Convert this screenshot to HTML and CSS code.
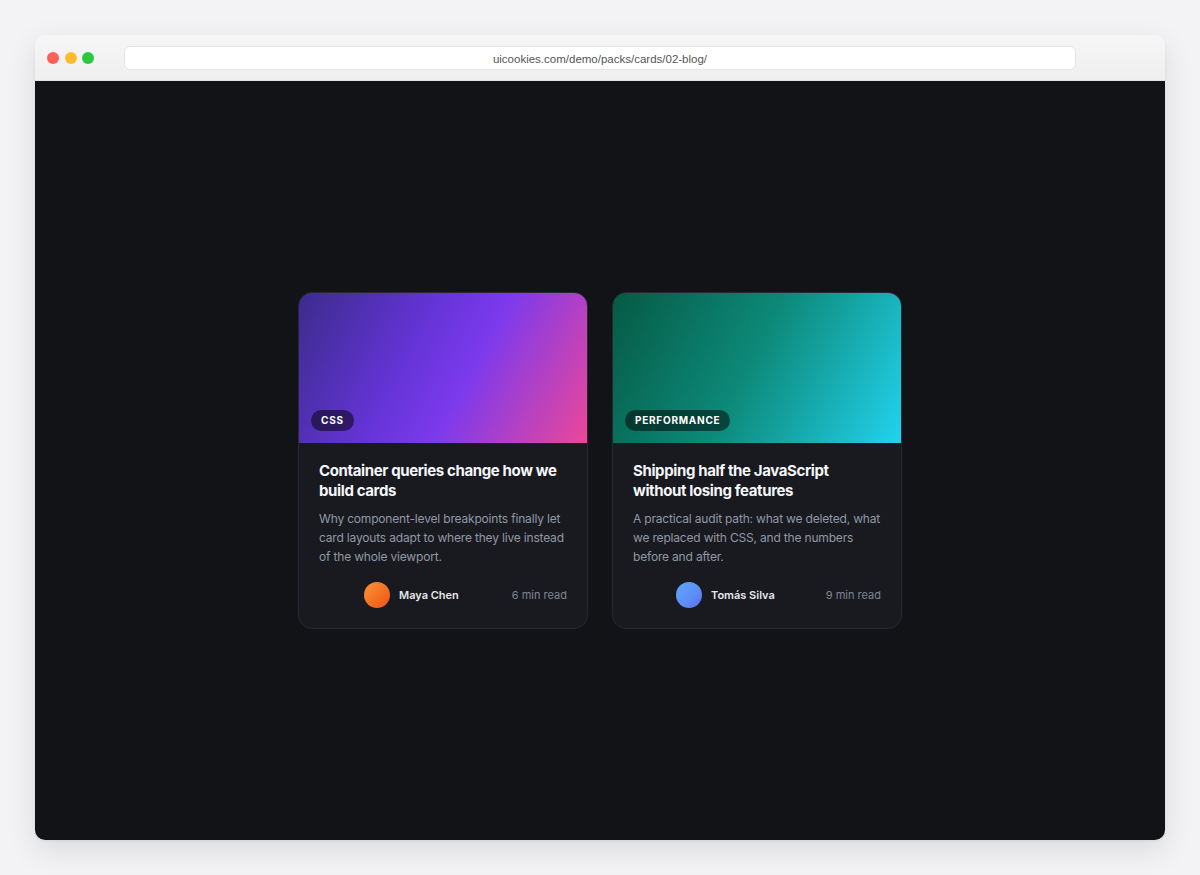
FILE: index.html
```html
<!DOCTYPE html>
<html lang="en">
<head>
    <meta charset="UTF-8">
    <meta name="viewport" content="width=device-width, initial-scale=1.0">
    <title>Cards - Blog</title>
    <link rel="stylesheet" href="styles.css">
</head>
<body>
    <div class="window">
        <div class="titlebar">
            <div class="dots">
                <span class="dot red"></span>
                <span class="dot yellow"></span>
                <span class="dot green"></span>
            </div>
            <div class="url">uicookies.com/demo/packs/cards/02-blog/</div>
        </div>

        <main class="stage">
            <article class="card">
                <div class="cover cover-css">
                    <span class="tag">CSS</span>
                </div>
                <div class="card-body">
                    <h3>Container queries change how we build cards</h3>
                    <p>Why component-level breakpoints finally let card layouts adapt to where they live instead of the whole viewport.</p>
                    <div class="meta">
                        <span></span>
                        <div class="author">
                            <span class="avatar avatar-orange"></span>
                            <span class="name">Maya Chen</span>
                        </div>
                        <span class="read">6 min read</span>
                    </div>
                </div>
            </article>

            <article class="card">
                <div class="cover cover-perf">
                    <span class="tag">Performance</span>
                </div>
                <div class="card-body">
                    <h3>Shipping half the JavaScript without losing features</h3>
                    <p>A practical audit path: what we deleted, what we replaced with CSS, and the numbers before and after.</p>
                    <div class="meta">
                        <span></span>
                        <div class="author">
                            <span class="avatar avatar-blue"></span>
                            <span class="name">Tomás Silva</span>
                        </div>
                        <span class="read">9 min read</span>
                    </div>
                </div>
            </article>
        </main>
    </div>
</body>
</html>
```

FILE: styles.css
```css
body {
    margin: 0;
    padding: 35px;
    background: #f3f3f5;
    font-family: Inter, "Noto Sans", sans-serif;
}
.window {
    height: 805px;
    display: flex;
    flex-direction: column;
    border-radius: 10px;
    overflow: hidden;
    box-shadow: 0 10px 30px rgba(0,0,0,0.10), 0 1px 3px rgba(0,0,0,0.06);
}
.titlebar {
    height: 45px;
    display: grid;
    grid-template-columns: 89px 1fr 89px;
    align-items: center;
    background: linear-gradient(#f6f6f6, #efefef);
    border-bottom: 1px solid #e2e2e2;
}
.dots {
    display: flex;
    gap: 5.5px;
    padding-left: 12px;
}
.dot {
    width: 12px;
    height: 12px;
    border-radius: 50%;
}
.red { background: #fe5f57; }
.yellow { background: #febc2e; }
.green { background: #28c840; }
.url {
    height: 24px;
    line-height: 24px;
    background: #fff;
    border: 1px solid #e4e4e4;
    border-radius: 6px;
    box-sizing: border-box;
    text-align: center;
    font-family: "Liberation Sans", Arial, sans-serif;
    font-size: 11.5px;
    color: #555;
}
.stage {
    flex: 1;
    background: #111317;
    display: flex;
    justify-content: center;
    align-items: center;
    gap: 24px;
}
.card {
    width: 290px;
    box-sizing: border-box;
    background: #181a20;
    border: 1px solid #262930;
    border-radius: 14px;
    overflow: hidden;
}
.cover {
    height: 150px;
    box-sizing: border-box;
    padding: 12px;
    display: flex;
    align-items: flex-end;
}
.cover-css {
    background: linear-gradient(118deg, #3b2c8c 0%, #6434d6 38%, #7c3aed 58%, #ec4899 100%);
}
.cover-perf {
    background: linear-gradient(118deg, #065a44 0%, #0d8a7a 48%, #16a8aa 70%, #22d3ee 100%);
}
.tag {
    height: 21px;
    line-height: 21px;
    padding: 0 10px;
    border-radius: 11px;
    background: rgba(0,0,0,0.5);
    color: #fff;
    font-size: 10px;
    font-weight: 700;
    letter-spacing: 0.075em;
    text-transform: uppercase;
}
.card-body {
    padding: 18px 20px 20px;
}
.card-body h3 {
    margin: 0;
    font-size: 15px;
    line-height: 20px;
    font-weight: 700;
    color: #f5f6f8;
    letter-spacing: -0.025em;
}
.card-body p {
    margin: 8px 0 0;
    font-size: 12px;
    line-height: 19px;
    color: #9298a4;
    letter-spacing: -0.015em;
}
.meta {
    margin-top: 16px;
    display: flex;
    justify-content: space-between;
    align-items: center;
}
.author {
    display: flex;
    align-items: center;
    gap: 9px;
}
.avatar {
    width: 26px;
    height: 26px;
    border-radius: 50%;
}
.avatar-orange { background: linear-gradient(135deg, #fb923c, #f26b1d 65%, #e8502c); }
.avatar-blue { background: linear-gradient(135deg, #60a5fa, #5b8ff5 60%, #6366f1); }
.name {
    font-size: 11px;
    font-weight: 600;
    color: #e6e7ea;
}
.read {
    padding-left: 8px;
    font-size: 11px;
    color: #7f8590;
}
```
